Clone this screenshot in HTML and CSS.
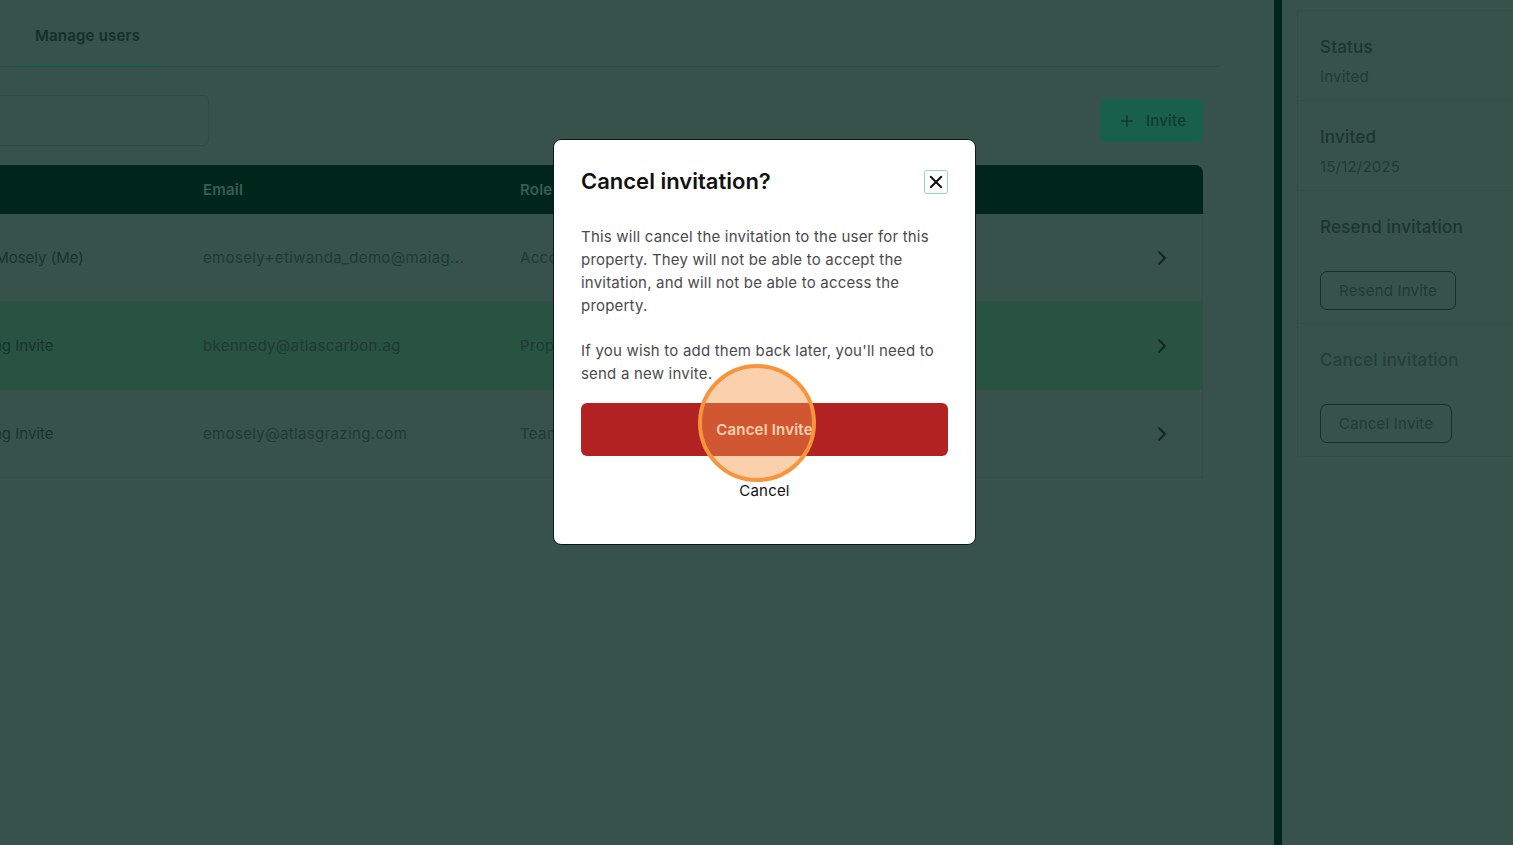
FILE: index.html
```html
<!DOCTYPE html>
<html lang="en">
<head>
  <meta charset="UTF-8">
  <meta name="viewport" content="width=device-width, initial-scale=1.0">
  <title>Manage users</title>
  <link rel="stylesheet" href="styles.css">
</head>
<body>
  <div class="layout">
    <main class="main">
      <div class="tabs">
        <div class="tab active">Manage users</div>
      </div>

      <div class="content">
        <div class="toolbar">
          <div class="search"></div>
          <button class="invite-btn">
            <svg width="18" height="18" viewBox="0 0 24 24" fill="none" stroke="currentColor" stroke-width="2" stroke-linecap="round"><path d="M5 12h14"/><path d="M12 5v14"/></svg>
            Invite
          </button>
        </div>

        <div class="table">
          <div class="table-head">
            <div>Name</div>
            <div>Email</div>
            <div>Role</div>
            <div></div>
          </div>
          <div class="table-row">
            <div class="cell-name">Emily Mosely (Me)</div>
            <div class="cell">emosely+etiwanda_demo@maiag...</div>
            <div class="cell">Account owner</div>
            <div class="cell-arrow">
              <svg width="24" height="24" viewBox="0 0 24 24" fill="none" stroke="currentColor" stroke-width="2" stroke-linecap="round" stroke-linejoin="round"><path d="m9 18 6-6-6-6"/></svg>
            </div>
          </div>
          <div class="table-row selected">
            <div class="cell-name">Pending Invite</div>
            <div class="cell">bkennedy@atlascarbon.ag</div>
            <div class="cell">Property manager</div>
            <div class="cell-arrow">
              <svg width="24" height="24" viewBox="0 0 24 24" fill="none" stroke="currentColor" stroke-width="2" stroke-linecap="round" stroke-linejoin="round"><path d="m9 18 6-6-6-6"/></svg>
            </div>
          </div>
          <div class="table-row">
            <div class="cell-name">Pending Invite</div>
            <div class="cell">emosely@atlasgrazing.com</div>
            <div class="cell">Team member</div>
            <div class="cell-arrow">
              <svg width="24" height="24" viewBox="0 0 24 24" fill="none" stroke="currentColor" stroke-width="2" stroke-linecap="round" stroke-linejoin="round"><path d="m9 18 6-6-6-6"/></svg>
            </div>
          </div>
        </div>
      </div>
    </main>

    <div class="divider"></div>

    <aside class="panel">
      <div class="panel-section">
        <div class="panel-title">Status</div>
        <div class="panel-value">Invited</div>
      </div>
      <div class="panel-section">
        <div class="panel-title">Invited</div>
        <div class="panel-value">15/12/2025</div>
      </div>
      <div class="panel-section">
        <div class="panel-title">Resend invitation</div>
        <button class="outline-btn">Resend Invite</button>
      </div>
      <div class="panel-section">
        <div class="panel-title muted">Cancel invitation</div>
        <button class="outline-btn">Cancel Invite</button>
      </div>
    </aside>
  </div>

  <!-- cancel invitation dialog -->
  <div class="modal">
    <div class="modal-header">
      <h2>Cancel invitation?</h2>
      <button class="close-btn">
        <svg width="18" height="18" viewBox="0 0 24 24" fill="none" stroke="currentColor" stroke-width="2.6" stroke-linecap="round"><path d="M5 5l14 14"/><path d="M19 5L5 19"/></svg>
      </button>
    </div>
    <p>This will cancel the invitation to the user for this property. They will not be able to accept the invitation, and will not be able to access the property.</p>
    <p>If you wish to add them back later, you'll need to send a new invite.</p>
    <button class="danger-btn">Cancel Invite</button>
    <button class="text-btn">Cancel</button>
  </div>

  <div class="click-marker"></div>
</body>
</html>
```

FILE: styles.css
```css
body {
  margin: 0;
  font-family: Inter, "Liberation Sans", sans-serif;
  letter-spacing: 0.2px;
  background-color: #37524a;
  overflow: hidden;
}

.layout {
  display: flex;
  height: 845px;
}

.main {
  width: 1274px;
  flex-shrink: 0;
  padding-right: 71px;
  box-sizing: border-box;
}

.tabs {
  display: flex;
  margin-right: -17px;
  border-bottom: 1px solid #324b44;
  height: 67px;
  box-sizing: border-box;
  padding-left: 18px;
}

.tab {
  padding: 0 17px;
  font-size: 15px;
  font-weight: 600;
  color: #11302a;
  line-height: 72px;
  height: 66px;
  box-sizing: border-box;
}

.tab.active {
  border-bottom: 2px solid #1d5f4a;
}

.content {
  margin-left: -71px;
}

.toolbar {
  display: flex;
  justify-content: space-between;
  align-items: center;
  margin-top: 28px;
}

.search {
  width: 280px;
  height: 51px;
  border: 1px solid #324b44;
  border-radius: 6px;
  box-sizing: border-box;
}

.invite-btn {
  display: flex;
  align-items: center;
  gap: 10px;
  height: 43px;
  width: 103px;
  padding: 0 0 0 18px;
  border: none;
  border-radius: 6px;
  background-color: #19604a;
  color: #0f3a2c;
  font-family: inherit;
  font-size: 15px;
  font-weight: 500;
  letter-spacing: 0.2px;
}

.table {
  margin-top: 19px;
}

.table-head,
.table-row {
  display: grid;
  grid-template-columns: 250px 317px 1fr 40px;
  padding: 0 24px;
  align-items: center;
}

.table-head {
  height: 49px;
  background-color: #00261b;
  border-radius: 8px 8px 0 0;
  color: #3a5c51;
  font-size: 15px;
  font-weight: 600;
}

.table-row {
  height: 88px;
  box-sizing: border-box;
  border-bottom: 1px solid #344e46;
  border-right: 1px solid #344e46;
  font-size: 15px;
  letter-spacing: 0.35px;
  color: #21403a;
}

.table-row.selected {
  background-color: #285242;
}

.cell-name {
  color: #17332c;
  letter-spacing: 0;
}

.cell {
  color: #1d3a33;
  white-space: nowrap;
  overflow: hidden;
}

.cell-arrow {
  display: flex;
  justify-content: flex-end;
  color: #12271f;
  padding-right: 4px;
}

.divider {
  width: 8px;
  background-color: #00261b;
  flex-shrink: 0;
}

.panel {
  flex: 1;
  padding: 10px 0 0 15px;
}

.panel-section {
  border-top: 1px solid #344e46;
  border-left: 1px solid #344e46;
  padding: 24px 0 13px 22px;
}

.panel-section:last-child {
  border-bottom: 1px solid #344e46;
}

.panel-title {
  font-size: 17px;
  font-weight: 500;
  line-height: 24px;
  color: #1b352e;
}

.panel-title.muted {
  color: #243f37;
}

.panel-value {
  margin-top: 8px;
  font-size: 15px;
  line-height: 20px;
  color: #203b34;
}

.outline-btn {
  margin-top: 32px;
  height: 39px;
  padding: 0 18px;
  background: none;
  border: 1px solid #15302a;
  border-radius: 7px;
  font-family: inherit;
  font-size: 15px;
  letter-spacing: 0.2px;
  color: #203a33;
}

/* dialog */
.modal {
  position: absolute;
  top: 139px;
  left: 553px;
  width: 423px;
  height: 406px;
  box-sizing: border-box;
  padding: 27px 27px 0;
  background-color: #fff;
  border: 1px solid #0c1a15;
  border-radius: 8px;
  display: flex;
  flex-direction: column;
}

.modal-header {
  display: flex;
  justify-content: space-between;
  align-items: flex-start;
  margin-bottom: 30px;
}

.modal-header h2 {
  margin: 0;
  font-size: 22px;
  font-weight: 600;
  line-height: 28px;
  letter-spacing: 0;
  color: #111;
}

.close-btn {
  display: flex;
  align-items: center;
  justify-content: center;
  width: 24px;
  height: 24px;
  margin-top: 3px;
  padding: 0;
  background: #fff;
  border: 1px solid #8fd8c2;
  border-radius: 3px;
  color: #111;
}

.modal p {
  margin: 0 0 22px;
  font-size: 15px;
  line-height: 23px;
  letter-spacing: 0.2px;
  color: #4b4b4b;
}

.modal p:last-of-type {
  margin-bottom: 18px;
}

.danger-btn {
  height: 53px;
  border: none;
  border-radius: 6px;
  background-color: #b22222;
  color: #fff;
  font-family: inherit;
  font-size: 15px;
  font-weight: 600;
  letter-spacing: 0.2px;
}

.text-btn {
  margin-top: 25px;
  background: none;
  border: none;
  padding: 0;
  font-family: inherit;
  font-size: 15px;
  line-height: 20px;
  letter-spacing: 0.2px;
  color: #111;
}

.click-marker {
  position: absolute;
  left: 698px;
  top: 364px;
  width: 118px;
  height: 118px;
  box-sizing: border-box;
  border-radius: 50%;
  border: 4px solid #f7953c;
  background-color: rgba(247, 150, 70, 0.45);
}
```
